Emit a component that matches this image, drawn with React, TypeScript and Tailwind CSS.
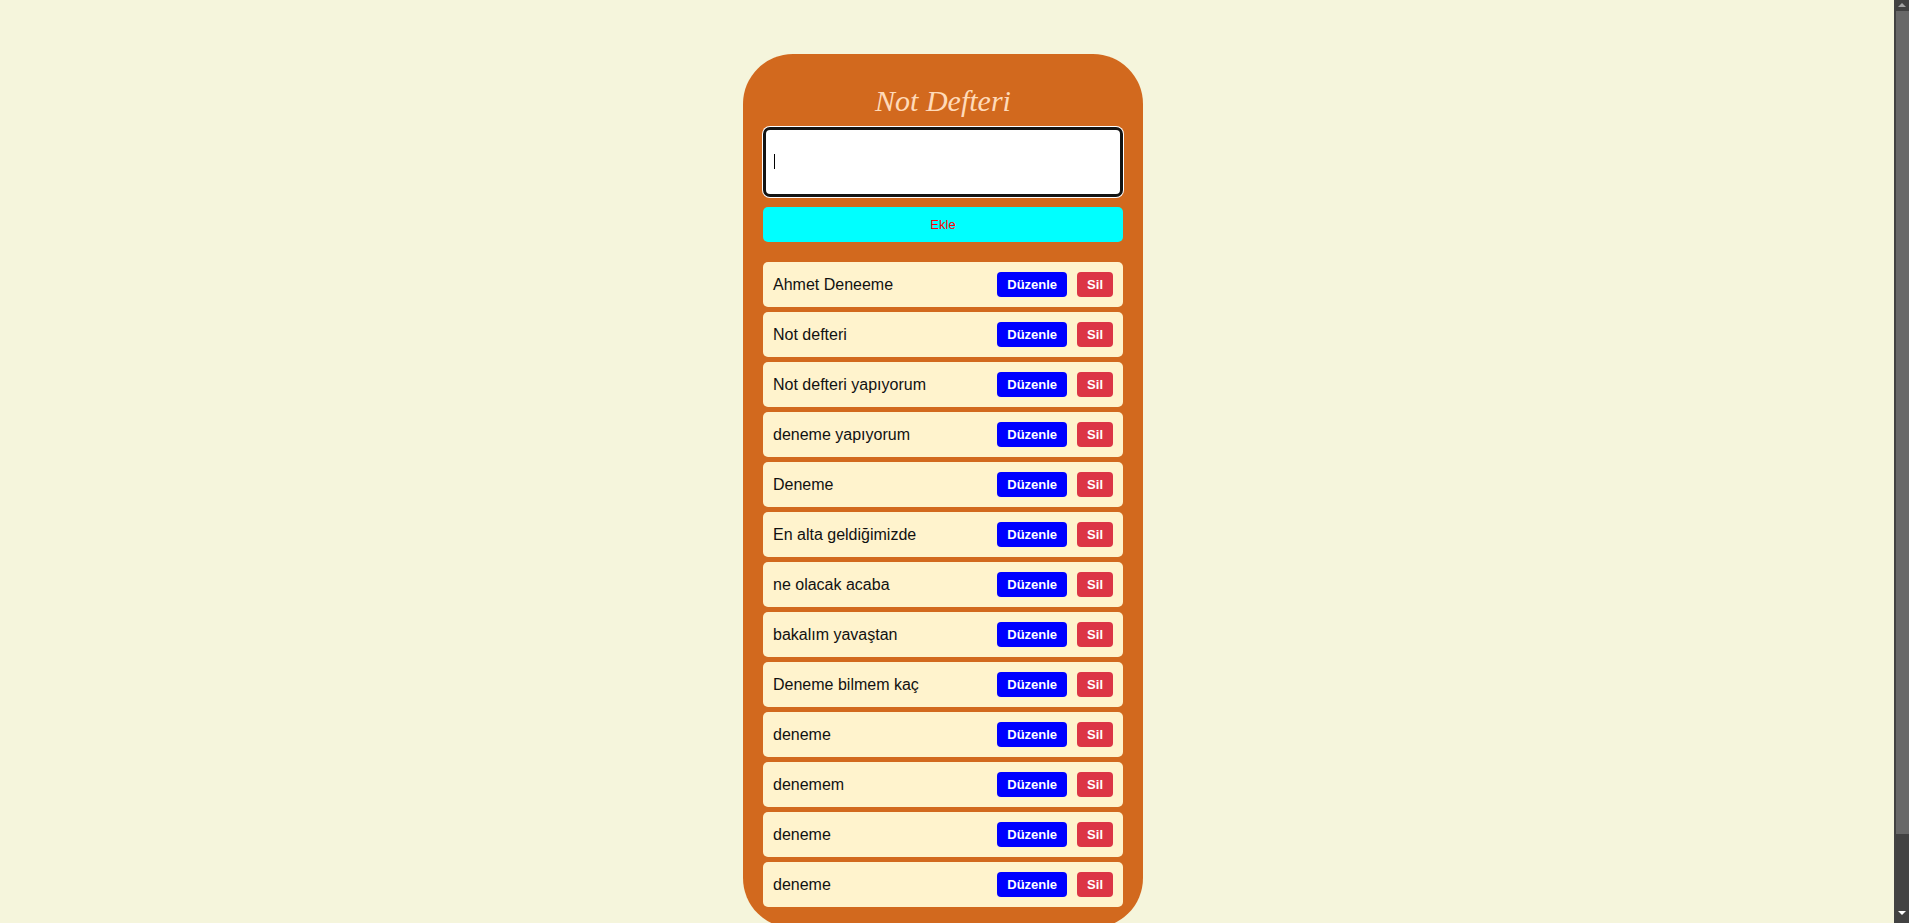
import React, { useState } from 'react';

const initialNotes = [
  'Ahmet Deneeme',
  'Not defteri',
  'Not defteri yapıyorum',
  'deneme yapıyorum',
  'Deneme',
  'En alta geldiğimizde',
  'ne olacak acaba',
  'bakalım yavaştan',
  'Deneme bilmem kaç',
  'deneme',
  'denemem',
  'deneme',
  'deneme',
];

// window scrollbar as it shows in the screenshot
function ScrollBar() {
  return (
    <div className="fixed right-0 top-0 h-screen w-[15px] bg-[#424242] flex flex-col">
      <div className="h-[11px] flex items-start justify-center pt-[2px]">
        <svg width="8" height="5" viewBox="0 0 8 5">
          <path d="M0 5 L4 1 L8 5 Z" fill="#a3a3a3" />
        </svg>
      </div>
      <div className="h-[823px] ml-[2px] bg-[#686868]" />
      <div className="flex-1 flex items-end justify-center pb-[7px]">
        <svg width="8" height="5" viewBox="0 0 8 5">
          <path d="M0 0 L8 0 L4 4 Z" fill="#ffffff" />
        </svg>
      </div>
    </div>
  );
}

export default function App() {
  const [notes, setNotes] = useState(initialNotes);
  const [text, setText] = useState('');

  const addNote = () => {
    if (!text.trim()) return;
    setNotes([...notes, text]);
    setText('');
  };

  return (
    <div className="min-h-screen bg-[#f5f5dc] font-['Liberation_Sans',Arial,sans-serif]">
      <div className="pt-[54px] pb-[54px] pr-[23px]">
        <div className="mx-auto w-[400px] bg-[#d2691e] rounded-[50px] px-[20px] pt-[30px] pb-[21px]">
          <h1 className="text-center text-[30px] leading-[34px] italic text-[#ffdab9] font-['Liberation_Serif','Times_New_Roman',serif] mb-[9px]">
            Not Defteri
          </h1>

          {/* note input */}
          <div className="relative">
            <textarea
              value={text}
              onChange={(e) => setText(e.target.value)}
              className="block w-full h-[70px] resize-none bg-white border-[3px] border-[#141414] rounded-[7px] ring-1 ring-white outline-none px-[8px] py-[8px] text-[16px] text-black"
            />
            {text === '' && (
              <span className="absolute left-[11px] top-[27px] w-[1px] h-[15px] bg-black" />
            )}
          </div>

          <button
            onClick={addNote}
            className="mt-[10px] w-full h-[35px] bg-[#00ffff] text-[#ff0000] text-[13px] rounded-[5px]"
          >
            Ekle
          </button>

          <ul className="mt-[20px] flex flex-col gap-[5px]">
            {notes.map((note, i) => (
              <li
                key={i}
                className="h-[45px] bg-[#fff3cd] rounded-[5px] pl-[10px] pr-[10px] flex items-center justify-between"
              >
                <span className="text-[16px] text-[#111]">{note}</span>
                <div className="flex items-center gap-[10px]">
                  <button className="h-[25px] px-[10px] bg-[#0000ff] text-white text-[13px] font-bold rounded-[4px]">
                    Düzenle
                  </button>
                  <button
                    onClick={() => setNotes(notes.filter((_, j) => j !== i))}
                    className="h-[25px] px-[10px] bg-[#dc3545] text-white text-[13px] font-bold rounded-[4px]"
                  >
                    Sil
                  </button>
                </div>
              </li>
            ))}
          </ul>
        </div>
      </div>
      <ScrollBar />
    </div>
  );
}
